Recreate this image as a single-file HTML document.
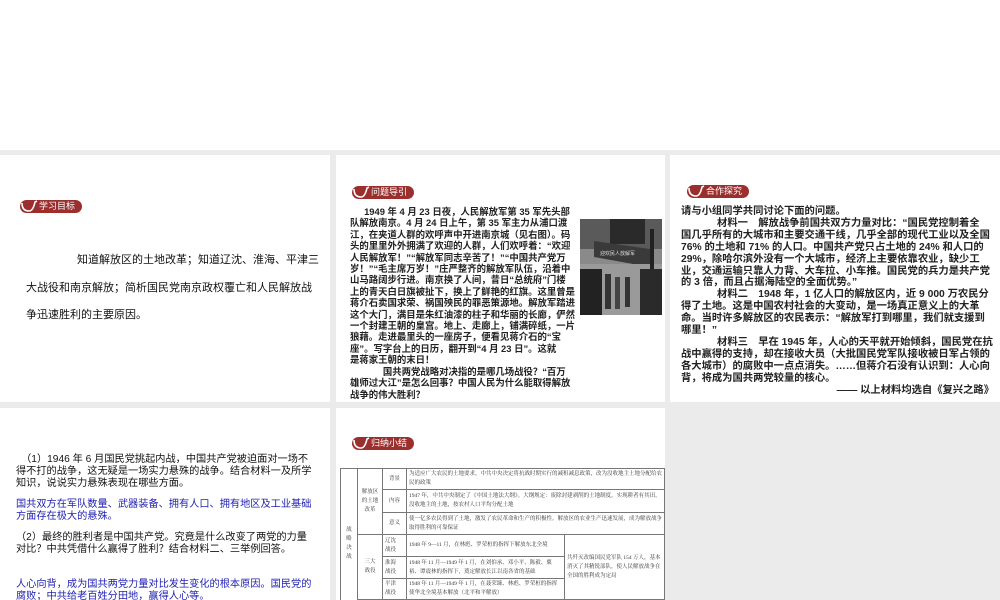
<!DOCTYPE html>
<html><head><meta charset="utf-8"><style>
*{margin:0;padding:0;box-sizing:border-box}
body{width:1000px;height:600px;background:#fff;position:relative;overflow:hidden;font-family:"Liberation Sans","Noto Sans CJK SC",sans-serif;color:#111}
.gray{position:absolute;left:0;top:150px;width:1000px;height:450px;background:#ebebeb}
.p{position:absolute;background:#fff;overflow:hidden}
.badge{position:absolute;height:13px;background:#9a2f2e;border-radius:7px;color:#fff;font-size:9px;line-height:13px;padding-left:19px;padding-right:7px;white-space:nowrap}
.badge svg{position:absolute;left:1px;top:0}
.t{position:absolute;white-space:nowrap}
.b{color:#1f1fb0}
table{border-collapse:collapse;font-family:"Liberation Serif","Noto Serif CJK SC",serif;font-size:5.5px;color:#333}
td{border:1px solid #777;padding:1px 2px;line-height:9px;vertical-align:middle}
</style></head><body>
<div class="gray"></div>

<div class="p" style="left:0;top:155px;width:330px;height:247px">
  <div class="badge" style="left:20px;top:45px">
    <svg width="18" height="13" viewBox="0 0 18 13"><path d="M1 3 Q1 11 8 11 Q12 11 14 2 L16 1" stroke="#fff" stroke-width="1.6" fill="none"/></svg>学习目标</div>
  <div class="t" style="left:77px;top:92px;font-size:11px;line-height:27.5px">知道解放区的土地改革；知道辽沈、淮海、平津三</div>
  <div class="t" style="left:26px;top:119.5px;font-size:11px;line-height:27.5px">大战役和南京解放；简析国民党南京政权覆亡和人民解放战</div>
  <div class="t" style="left:26px;top:147px;font-size:11px;line-height:27.5px">争迅速胜利的主要原因。</div>
</div>

<div class="p" style="left:336px;top:155px;width:329px;height:247px">
  <div class="badge" style="left:16px;top:31px">
    <svg width="18" height="13" viewBox="0 0 18 13"><path d="M1 3 Q1 11 8 11 Q12 11 14 2 L16 1" stroke="#fff" stroke-width="1.6" fill="none"/></svg>问题导引</div>
  <div style="position:absolute;left:14px;top:51px;width:230px;font-size:9.4px;line-height:11.4px;font-weight:bold;color:#222;white-space:nowrap">
  <div>&emsp;&ensp;1949 年 4 月 23 日夜，人民解放军第 35 军先头部</div>
  <div>队解放南京。4 月 24 日上午，第 35 军主力从浦口渡</div>
  <div>江，在夹道人群的欢呼声中开进南京城（见右图）。码</div>
  <div>头的里里外外拥满了欢迎的人群，人们欢呼着：“欢迎</div>
  <div>人民解放军！”“解放军同志辛苦了！”“中国共产党万</div>
  <div>岁！”“毛主席万岁！”庄严整齐的解放军队伍，沿着中</div>
  <div>山马路阔步行进。南京换了人间，昔日“总统府”门楼</div>
  <div>上的青天白日旗被扯下，换上了鲜艳的红旗。这里曾是</div>
  <div>蒋介石卖国求荣、祸国殃民的罪恶策源地。解放军踏进</div>
  <div>这个大门，满目是朱红油漆的柱子和华丽的长廊，俨然</div>
  <div>一个封建王朝的皇宫。地上、走廊上，铺满碎纸，一片</div>
  <div>狼藉。走进最里头的一座房子，便看见蒋介石的“宝</div>
  <div>座”。写字台上的日历，翻开到“4 月 23 日”。这就</div>
  <div>是蒋家王朝的末日！</div>
  <div>&emsp;&emsp;&emsp;&ensp;国共两党战略对决指的是哪几场战役？“百万</div>
  <div>雄师过大江”是怎么回事？中国人民为什么能取得解放</div>
  <div>战争的伟大胜利？</div>
  </div>
  <svg style="position:absolute;left:244px;top:64px" width="82" height="96" viewBox="0 0 82 96">
    <rect width="82" height="96" fill="#8a8a8a"/>
    <rect x="0" y="0" width="82" height="30" fill="#5a5a5a"/>
    <rect x="30" y="0" width="35" height="25" fill="#2a2a2a"/>
    <polygon points="14,22 70,30 70,48 14,38" fill="#3a3a3a"/>
    <text x="20" y="36" font-size="5" fill="#ddd" font-family="Noto Sans CJK SC">迎欢民人放解军</text>
    <rect x="0" y="45" width="82" height="51" fill="#9a9a9a"/>
    <rect x="0" y="50" width="22" height="46" fill="#222"/>
    <rect x="25" y="55" width="6" height="35" fill="#333"/>
    <rect x="35" y="58" width="5" height="32" fill="#444"/>
    <rect x="45" y="58" width="5" height="30" fill="#333"/>
    <rect x="60" y="50" width="22" height="46" fill="#2a2a2a"/>
    <rect x="70" y="10" width="4" height="40" fill="#222"/>
  </svg>
</div>

<div class="p" style="left:670px;top:155px;width:330px;height:247px">
  <div class="badge" style="left:17px;top:30px">
    <svg width="18" height="13" viewBox="0 0 18 13"><path d="M1 3 Q1 11 8 11 Q12 11 14 2 L16 1" stroke="#fff" stroke-width="1.6" fill="none"/></svg>合作探究</div>
  <div style="position:absolute;left:11px;top:51px;font-size:10.3px;line-height:11.9px;font-weight:bold;color:#222;white-space:nowrap">
  <div>请与小组同学共同讨论下面的问题。</div>
  <div>&emsp;&emsp;&emsp;&ensp;材料一　解放战争前国共双方力量对比：“国民党控制着全</div>
  <div>国几乎所有的大城市和主要交通干线，几乎全部的现代工业以及全国</div>
  <div>76% 的土地和 71% 的人口。中国共产党只占土地的 24% 和人口的</div>
  <div>29%，除哈尔滨外没有一个大城市，经济上主要依靠农业，缺少工</div>
  <div>业，交通运输只靠人力背、大车拉、小车推。国民党的兵力是共产党</div>
  <div>的 3 倍，而且占据海陆空的全面优势。”</div>
  <div>&emsp;&emsp;&emsp;&ensp;材料二　1948 年，1 亿人口的解放区内，近 9 000 万农民分</div>
  <div>得了土地。这是中国农村社会的大变动，是一场真正意义上的大革</div>
  <div>命。当时许多解放区的农民表示：“解放军打到哪里，我们就支援到</div>
  <div>哪里！”</div>
  <div>&emsp;&emsp;&emsp;&ensp;材料三　早在 1945 年，人心的天平就开始倾斜，国民党在抗</div>
  <div>战中赢得的支持，却在接收大员（大批国民党军队接收被日军占领的</div>
  <div>各大城市）的腐败中一点点消失。……但蒋介石没有认识到：人心向</div>
  <div>背，将成为国共两党较量的核心。</div>
  <div style="text-align:right;width:313px">—— 以上材料均选自《复兴之路》</div>
  </div>
</div>

<div class="p" style="left:0;top:408px;width:330px;height:192px">
  <div style="position:absolute;left:16px;top:46px;font-size:10.2px;line-height:12px;white-space:nowrap">
  <div>&ensp;（1）1946 年 6 月国民党挑起内战，中国共产党被迫面对一场不</div>
  <div>得不打的战争，这无疑是一场实力悬殊的战争。结合材料一及所学</div>
  <div>知识，说说实力悬殊表现在哪些方面。</div>
  <div class="b" style="margin-top:9px">国共双方在军队数量、武器装备、拥有人口、拥有地区及工业基础</div>
  <div class="b">方面存在极大的悬殊。</div>
  <div style="margin-top:9px">（2）最终的胜利者是中国共产党。究竟是什么改变了两党的力量</div>
  <div>对比？中共凭借什么赢得了胜利？结合材料二、三举例回答。</div>
  <div class="b" style="margin-top:23px">人心向背，成为国共两党力量对比发生变化的根本原因。国民党的</div>
  <div class="b">腐败；中共给老百姓分田地，赢得人心等。</div>
  </div>
</div>

<div class="p" style="left:336px;top:408px;width:329px;height:192px">
  <div class="badge" style="left:16px;top:29px">
    <svg width="18" height="13" viewBox="0 0 18 13"><path d="M1 3 Q1 11 8 11 Q12 11 14 2 L16 1" stroke="#fff" stroke-width="1.6" fill="none"/></svg>归纳小结</div>
  <table style="position:absolute;left:4px;top:60px;width:325px">
    <colgroup><col style="width:17px"><col style="width:25px"><col style="width:24px"><col style="width:158px"><col></colgroup>
    <tr style="height:20px"><td rowspan="7" style="text-align:center">战<br>略<br>决<br>战</td><td rowspan="3" style="text-align:center">解放区<br>的土地<br>改革</td><td style="text-align:center">背景</td><td colspan="2">为适应广大农民的土地要求，中共中央决定将抗战时期实行的减租减息政策，改为没收地主土地分配给农民的政策</td></tr>
    <tr style="height:23px"><td style="text-align:center">内容</td><td colspan="2">1947 年，中共中央制定了《中国土地法大纲》。大纲规定：废除封建剥削的土地制度，实现耕者有其田，没收地主的土地，按农村人口平均分配土地</td></tr>
    <tr style="height:22px"><td style="text-align:center">意义</td><td colspan="2">使一亿多农民得到了土地，激发了农民革命和生产的积极性。解放区的农业生产迅速发展，成为解放战争取得胜利的可靠保证</td></tr>
    <tr style="height:22px"><td rowspan="3" style="text-align:center">三大<br>战役</td><td>辽沈<br>战役</td><td>1948 年 9—11 月，在林彪、罗荣桓的指挥下解放东北全境</td><td rowspan="3">共歼灭改编国民党军队 154 万人，基本消灭了其精锐部队，使人民解放战争在全国的胜利成为定局</td></tr>
    <tr style="height:22px"><td>淮海<br>战役</td><td>1948 年 11 月—1949 年 1 月，在刘伯承、邓小平、陈毅、粟裕、谭震林的指挥下，奠定解放长江以南各省的基础</td></tr>
    <tr style="height:21px"><td>平津<br>战役</td><td>1948 年 11 月—1949 年 1 月，在聂荣臻、林彪、罗荣桓的指挥使华北全境基本解放（北平和平解放）</td></tr>
    <tr style="height:20px"><td></td><td></td><td colspan="2"></td></tr>
  </table>
</div>
</body></html>
